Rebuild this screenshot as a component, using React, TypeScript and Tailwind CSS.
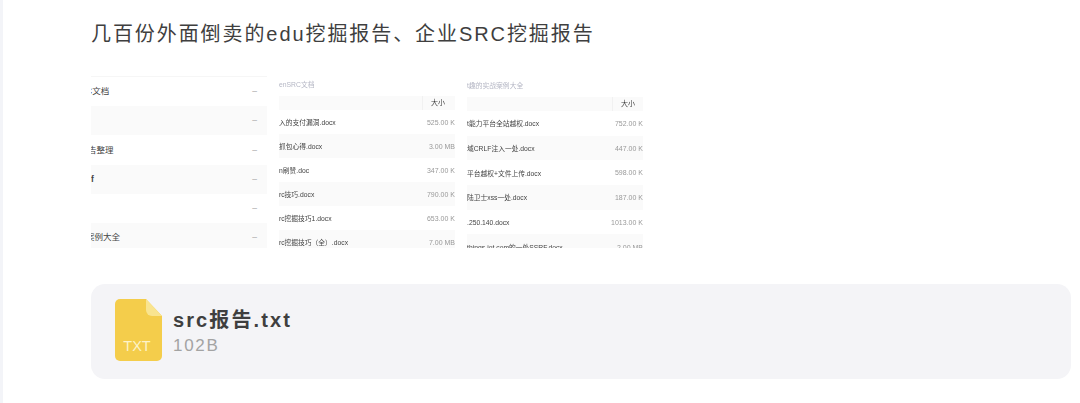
const leftRows = [
  { name: "C文档", shift: "-ml-[5px]" },
  { name: "", shift: "" },
  { name: "告整理", shift: "-ml-[3px]" },
  { name: "f", shift: "font-bold" },
  { name: "", shift: "" },
  { name: "案例大全", shift: "-ml-[5px]" },
];

const midRows = [
  ["入的支付漏洞.docx", "525.00 K"],
  ["抓包心得.docx", "3.00 MB"],
  ["n刷赞.doc", "347.00 K"],
  ["rc技巧.docx", "790.00 K"],
  ["rc挖掘技巧1.docx", "653.00 K"],
  ["rc挖掘技巧（全）.docx", "7.00 MB"],
];

const rightRows = [
  ["t能力平台全站越权.docx", "752.00 K"],
  ["域CRLF注入一处.docx", "447.00 K"],
  ["平台越权+文件上传.docx", "598.00 K"],
  ["陆卫士xss一处.docx", "187.00 K"],
  [".250.140.docx", "1013.00 K"],
  ["things-iot.com的一处SSRF.docx", "2.00 MB"],
];

function FileIcon() {
  return (
    <svg width="47" height="62" viewBox="0 0 47 62" className="mt-[-3px] shrink-0">
      <path d="M5 0H31L47 17V57a5 5 0 0 1-5 5H5a5 5 0 0 1-5-5V5a5 5 0 0 1 5-5Z" fill="#f4cd4b" />
      <path d="M31 0L47 17H37a6 6 0 0 1-6-6Z" fill="#f9e48f" />
      <text x="22" y="52" textAnchor="middle" fontSize="14.5" fill="#fdf3c8" fontFamily="'Liberation Sans', sans-serif">
        TXT
      </text>
    </svg>
  );
}

function SizeTable({
  title,
  rows,
  rowClass,
  topClass,
  sizeWidth,
}: {
  title: string;
  rows: string[][];
  rowClass: string;
  topClass: string;
  sizeWidth: string;
}) {
  return (
    <div className="h-[176px] w-[176px] shrink-0 overflow-hidden">
      <div className={`flex items-center pt-[3px] text-[6.8px] text-[#b4b6c4] ${topClass}`}>{title}</div>
      <div className="flex h-[14px] bg-[#fafafa]">
        <div className="flex-1" />
        <div className={`border-l border-[#f1f1f1] pl-[8px] text-[7px] leading-[14px] text-[#444] ${sizeWidth}`}>大小</div>
      </div>
      {rows.map(([name, size], i) => (
        <div key={name} className={`flex items-center justify-between whitespace-nowrap pt-[2px] text-[7px] ${rowClass} ${i % 2 ? "bg-[#fafafa]" : "bg-white"}`}>
          <span className="text-[6.75px] text-[#444]">{name}</span>
          <span className="text-[#999]">{size}</span>
        </div>
      ))}
    </div>
  );
}

export default function App() {
  return (
    <div className="h-[403px] w-[1080px] overflow-hidden border-l-[3px] border-[#f3f4f8] bg-white pl-[88px] pr-[9px] font-['Liberation_Sans','Noto_Sans_CJK_SC',sans-serif]">
      <h1 className="pt-[20px] text-[20px] font-normal leading-[28px] tracking-[1.92px] text-[#3f3f3f]">
        几百份外面倒卖的edu挖掘报告、企业SRC挖掘报告
      </h1>

      <div className="mt-[24px] flex h-[176px] w-[552px] gap-[12px] blur-[0.6px]">
        <div className="h-[176px] w-[176px] shrink-0 overflow-hidden pt-[4px]">
          <div className="border-t border-[#f6f6f6]" />
          {leftRows.map((row, i) => (
            <div key={i} className={`flex h-[29.2px] items-center justify-between pr-[10px] text-[8.5px] text-[#444] ${i % 2 ? "bg-[#fafafa]" : "bg-white"}`}>
              <span className={row.shift}>{row.name}</span>
              <span className="text-[#aaa]">–</span>
            </div>
          ))}
        </div>
        <SizeTable title="enSRC文档" rows={midRows} rowClass="h-[24px]" topClass="h-[24px]" sizeWidth="w-[33px]" />
        <SizeTable title="t趣的实战案例大全" rows={rightRows} rowClass="h-[24.7px]" topClass="h-[25px]" sizeWidth="w-[31px]" />
      </div>

      <div className="mt-[36px] flex h-[95px] items-center gap-[11px] rounded-[14px] bg-[#f4f4f7] pl-[24px]">
        <FileIcon />
        <div className="flex flex-col">
          <span className="text-[20px] font-bold leading-[28px] tracking-[2.1px] text-[#3f3f3f]">src报告.txt</span>
          <span className="text-[17px] leading-[24px] tracking-[1.7px] text-[#a3a3a3]">102B</span>
        </div>
      </div>
    </div>
  );
}
